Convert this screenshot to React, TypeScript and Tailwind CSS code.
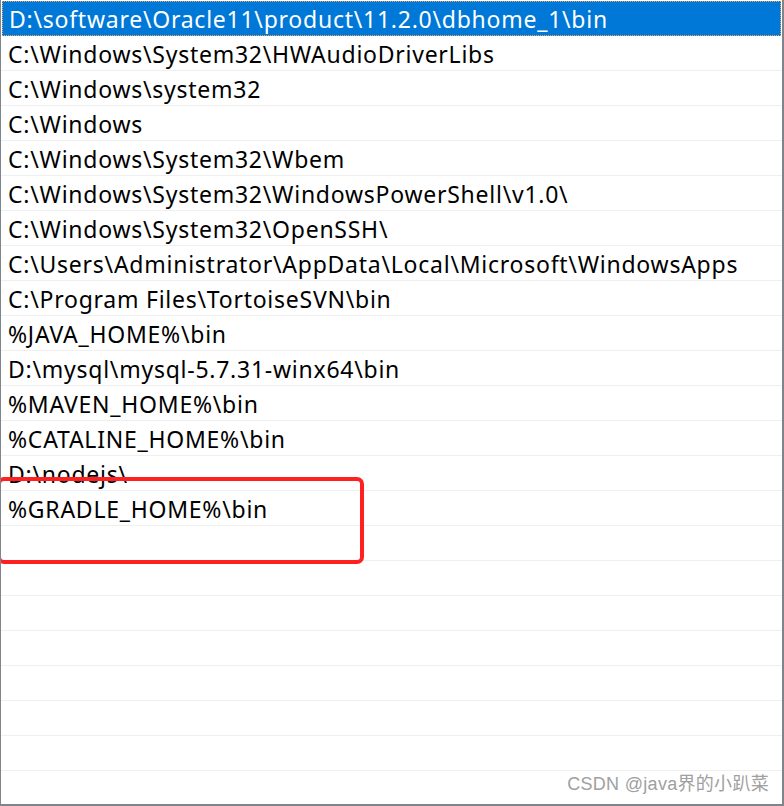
import React from "react";

const items = [
  "D:\\software\\Oracle11\\product\\11.2.0\\dbhome_1\\bin",
  "C:\\Windows\\System32\\HWAudioDriverLibs",
  "C:\\Windows\\system32",
  "C:\\Windows",
  "C:\\Windows\\System32\\Wbem",
  "C:\\Windows\\System32\\WindowsPowerShell\\v1.0\\",
  "C:\\Windows\\System32\\OpenSSH\\",
  "C:\\Users\\Administrator\\AppData\\Local\\Microsoft\\WindowsApps",
  "C:\\Program Files\\TortoiseSVN\\bin",
  "%JAVA_HOME%\\bin",
  "D:\\mysql\\mysql-5.7.31-winx64\\bin",
  "%MAVEN_HOME%\\bin",
  "%CATALINE_HOME%\\bin",
  "D:\\nodejs\\",
  "%GRADLE_HOME%\\bin",
];

export default function App() {
  const rows = [...items, ...Array(8).fill("")];
  return (
    <div className="relative w-[784px] h-[806px] bg-white border-l border-r-2 border-b-2 border-[#80848c] overflow-hidden font-['Noto_Sans',sans-serif]">
      <div className="flex flex-col pt-[1px]">
        {rows.map((t, i) =>
          i === 0 ? (
            <div
              key={i}
              className="h-[35px] ml-[1px] mr-[1px] bg-[#0078d7] border border-dotted border-[#f3a35a] text-white text-[23px] tracking-[0.75px] leading-[34px] pl-[6px] whitespace-nowrap"
            >
              {t}
            </div>
          ) : (
            <div
              key={i}
              className="h-[35px] border-b border-[#efefef] text-[#000] text-[23px] tracking-[0.75px] leading-[36px] pl-[7px] whitespace-nowrap"
            >
              {t}
            </div>
          )
        )}
      </div>
      <div className="absolute left-[-4px] top-[477px] w-[367px] h-[87px] border-[4px] border-[#ff2020] rounded-[7px]" />
      <div className="absolute right-[13px] bottom-[6px] text-[18px] text-[#a0a0a0] tracking-[0.3px] font-['Liberation_Sans','Noto_Sans_CJK_SC',sans-serif]">
        CSDN @java界的小趴菜
      </div>
    </div>
  );
}
